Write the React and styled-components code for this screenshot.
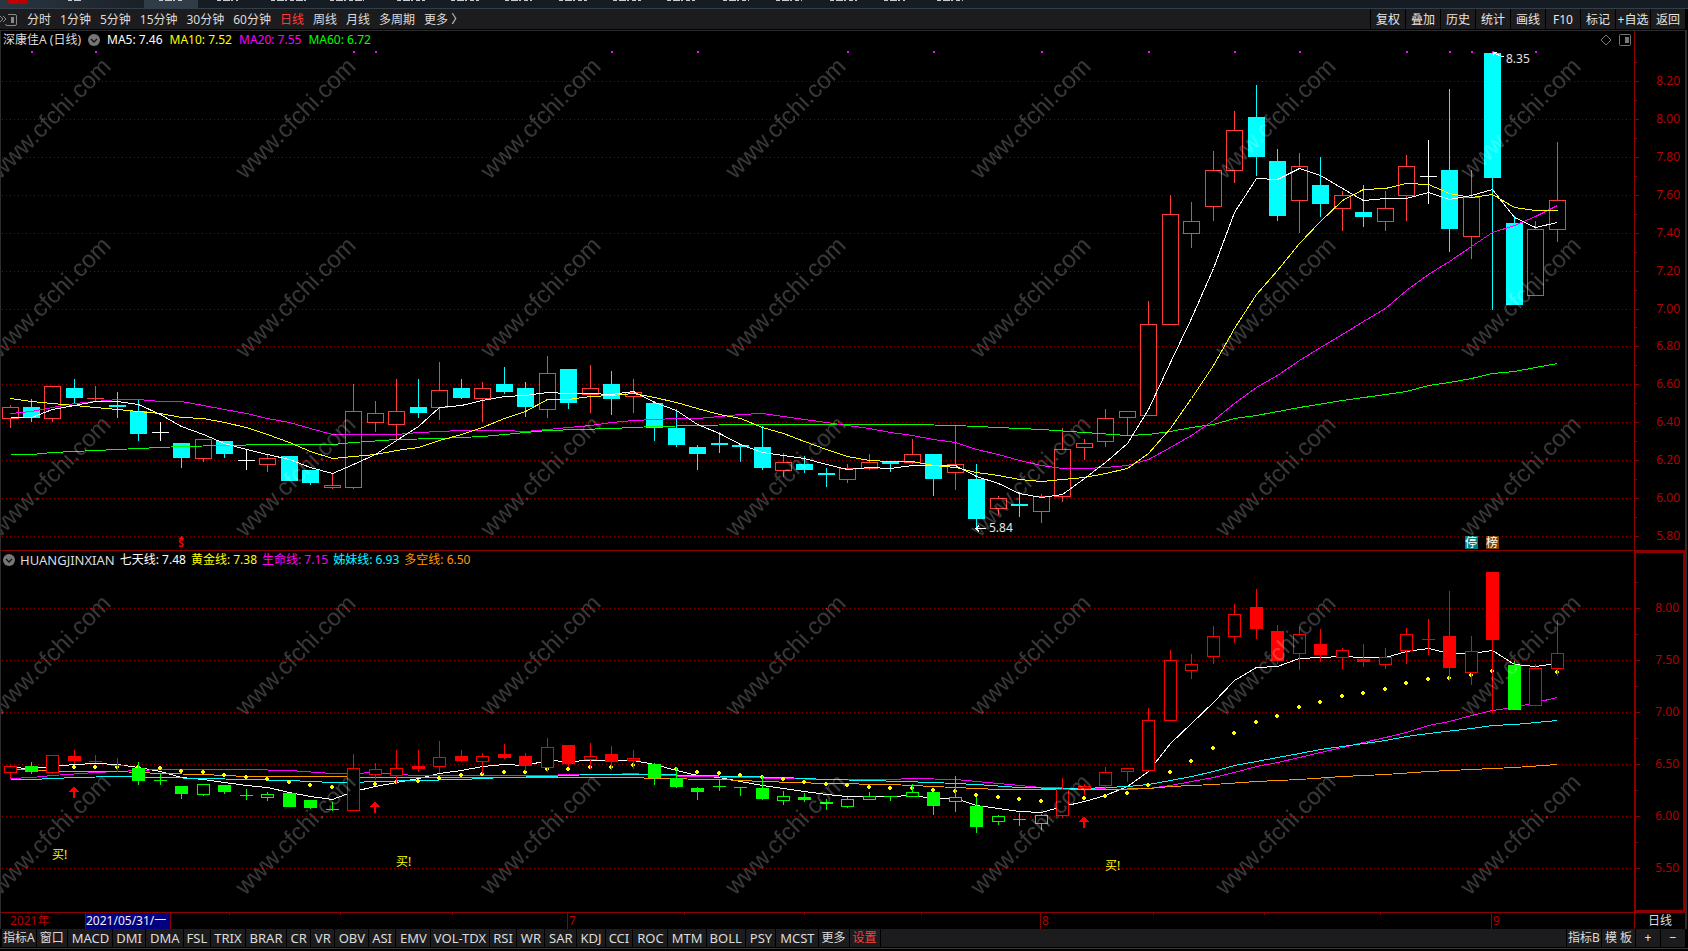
import React, { useLayoutEffect, useRef, useState } from "react"
import styled, { createGlobalStyle } from "styled-components"

const GlobalStyle = createGlobalStyle`
  * {
    box-sizing: border-box;
  }

  body {
    margin: 0;
    background: #000;
    color: #dcdcdc;
    font: 12px/16px "Noto Sans", "Noto Sans CJK SC", sans-serif;
  }

  button {
    margin: 0;
    border: 0;
    font: inherit;
    white-space: nowrap;
    cursor: pointer;
  }

  svg {
    display: block;
  }

  svg text {
    font-size: 12px;
  }
`

const WHITE = "#ffffff"
const YELLOW = "#ffff00"
const MAGENTA = "#ff00ff"
const CYAN = "#00ffff"
const LIME = "#00ff00"
const ORANGE = "#ff9900"
const RED = "#ff0000"
const UP = "#ff3c3c"
const FRAME = "#8c0000"
const LABEL = "#b40000"

const periods = [
  "分时",
  "1分钟",
  "5分钟",
  "15分钟",
  "30分钟",
  "60分钟",
  "日线",
  "周线",
  "月线",
  "多周期",
  "更多 〉",
]

const tools = [
  "复权",
  "叠加",
  "历史",
  "统计",
  "画线",
  "F10",
  "标记",
  "+自选",
  "返回",
]

const indicators = [
  "MACD",
  "DMI",
  "DMA",
  "FSL",
  "TRIX",
  "BRAR",
  "CR",
  "VR",
  "OBV",
  "ASI",
  "EMV",
  "VOL-TDX",
  "RSI",
  "WR",
  "SAR",
  "KDJ",
  "CCI",
  "ROC",
  "MTM",
  "BOLL",
  "PSY",
  "MCST",
]

// open, close, high, low
const days = [
  [6.42, 6.48, 6.49, 6.37],
  [6.48, 6.42, 6.52, 6.4],
  [6.42, 6.59, 6.59, 6.4],
  [6.58, 6.53, 6.63, 6.5],
  [6.52, 6.53, 6.59, 6.51],
  [6.49, 6.48, 6.56, 6.42],
  [6.46, 6.34, 6.52, 6.3],
  [6.35, 6.35, 6.4, 6.3],
  [6.29, 6.21, 6.29, 6.16],
  [6.21, 6.31, 6.31, 6.19],
  [6.3, 6.23, 6.3, 6.21],
  [6.2, 6.2, 6.26, 6.15],
  [6.18, 6.21, 6.23, 6.14],
  [6.22, 6.09, 6.22, 6.09],
  [6.15, 6.08, 6.15, 6.07],
  [6.06, 6.07, 6.13, 6.05],
  [6.06, 6.46, 6.6, 6.05],
  [6.4, 6.45, 6.51, 6.35],
  [6.39, 6.46, 6.63, 6.31],
  [6.48, 6.45, 6.63, 6.42],
  [6.48, 6.57, 6.72, 6.41],
  [6.58, 6.53, 6.63, 6.52],
  [6.53, 6.58, 6.61, 6.4],
  [6.6, 6.56, 6.69, 6.55],
  [6.58, 6.48, 6.61, 6.43],
  [6.47, 6.66, 6.75, 6.42],
  [6.68, 6.5, 6.68, 6.47],
  [6.55, 6.58, 6.7, 6.45],
  [6.6, 6.52, 6.67, 6.44],
  [6.54, 6.56, 6.63, 6.45],
  [6.5, 6.37, 6.51, 6.3],
  [6.37, 6.28, 6.47, 6.27],
  [6.27, 6.23, 6.28, 6.15],
  [6.29, 6.28, 6.35, 6.24],
  [6.28, 6.27, 6.28, 6.19],
  [6.27, 6.16, 6.38, 6.15],
  [6.15, 6.19, 6.24, 6.11],
  [6.18, 6.15, 6.22, 6.13],
  [6.13, 6.12, 6.16, 6.06],
  [6.1, 6.16, 6.18, 6.08],
  [6.16, 6.19, 6.23, 6.15],
  [6.19, 6.18, 6.19, 6.14],
  [6.19, 6.23, 6.31, 6.18],
  [6.23, 6.1, 6.23, 6.01],
  [6.14, 6.18, 6.38, 6.04],
  [6.1, 5.89, 6.18, 5.84],
  [5.95, 6.0, 6.01, 5.91],
  [5.97, 5.96, 6.03, 5.9],
  [5.93, 6.01, 6.02, 5.87],
  [6.01, 6.26, 6.37, 5.98],
  [6.27, 6.29, 6.31, 6.2],
  [6.3, 6.42, 6.47, 6.27],
  [6.43, 6.46, 6.46, 6.33],
  [6.44, 6.92, 7.04, 6.44],
  [6.92, 7.5, 7.6, 6.92],
  [7.4, 7.46, 7.56, 7.32],
  [7.54, 7.73, 7.83, 7.46],
  [7.73, 7.94, 8.04, 7.66],
  [8.01, 7.8, 8.18, 7.7],
  [7.78, 7.49, 7.84, 7.46],
  [7.57, 7.75, 7.82, 7.4],
  [7.65, 7.55, 7.8, 7.48],
  [7.53, 7.6, 7.62, 7.41],
  [7.51, 7.48, 7.65, 7.43],
  [7.46, 7.53, 7.62, 7.41],
  [7.6, 7.75, 7.81, 7.46],
  [7.7, 7.7, 7.89, 7.55],
  [7.73, 7.42, 8.16, 7.3],
  [7.38, 7.59, 7.73, 7.26],
  [8.35, 7.69, 8.35, 6.99],
  [7.45, 7.02, 7.49, 7.02],
  [7.07, 7.42, 7.46, 7.07],
  [7.42, 7.57, 7.88, 7.35],
]

const closes = days.map(day => day[1])

// the first values need closes from before the visible range
const average = (n, head) =>
  closes.map((_, i) =>
    i < head.length
      ? [i, head[i]]
      : [i, closes.slice(i - n + 1, i + 1).reduce((a, b) => a + b, 0) / n]
  )

const ma5 = average(5, [6.43, 6.43, 6.47, 6.49])
const ma10 = average(10, [
  6.53, 6.51, 6.5, 6.49, 6.48, 6.47, 6.46, 6.45, 6.43,
])
const ma20 = average(20, [
  6.45, 6.46, 6.48, 6.5, 6.51, 6.52, 6.52, 6.51, 6.51, 6.49, 6.47, 6.45, 6.42,
  6.4, 6.37, 6.34, 6.34, 6.34, 6.34,
])
const ma60 = [
  [0, 6.23], [1, 6.234], [2, 6.244], [4, 6.255], [6, 6.266], [8, 6.273],
  [10, 6.281], [12, 6.287], [15, 6.287], [16, 6.296], [18, 6.31],
  [20, 6.318], [22, 6.33], [25, 6.358], [28, 6.37], [30, 6.382],
  [34, 6.392], [42, 6.392], [44, 6.385], [46, 6.376], [48, 6.362],
  [50, 6.347], [52, 6.335], [53, 6.34], [54, 6.356], [55, 6.374],
  [56, 6.393], [57, 6.42], [58, 6.44], [60, 6.479], [62, 6.515],
  [64, 6.548], [65, 6.567], [66, 6.595], [67, 6.611], [68, 6.632],
  [69, 6.658], [70, 6.669], [71, 6.69], [72, 6.711],
]

const weekLine = [
  6.47, 6.458, 6.48, 6.5, 6.51, 6.5, 6.468, 6.436, 6.375, 6.356, 6.327, 6.301,
  6.276, 6.234, 6.192, 6.163, 6.24, 6.285, 6.324, 6.362, 6.413, 6.442, 6.48,
  6.5, 6.49, 6.535, 6.526, 6.538, 6.538, 6.538, 6.503, 6.446, 6.397, 6.372,
  6.337, 6.298, 6.269, 6.24, 6.215, 6.192, 6.192, 6.195, 6.202, 6.176, 6.17,
  6.106, 6.077, 6.051, 6.038, 6.1, 6.147, 6.205, 6.288, 6.43, 6.7, 6.894,
  7.093, 7.308, 7.43, 7.442, 7.519, 7.529, 7.538, 7.529, 7.529, 7.587, 7.615,
  7.571, 7.567, 7.596, 7.458, 7.442, 7.468,
].map((price, i) => [i, price])
const lifeLine = [
  [0, 6.362], [1, 6.372], [2, 6.391], [4, 6.423], [6, 6.442], [7, 6.449],
  [11, 6.449], [13, 6.442], [15, 6.413], [16, 6.413], [17, 6.423],
  [18, 6.404], [19, 6.394], [25, 6.394], [26, 6.404], [28, 6.404],
  [29, 6.413], [30, 6.397], [32, 6.381], [34, 6.375], [38, 6.356],
  [41, 6.356], [42, 6.362], [44, 6.356], [46, 6.317], [48, 6.276],
  [50, 6.266], [52, 6.262], [53, 6.272], [54, 6.298], [55, 6.34],
  [56, 6.378], [57, 6.423], [58, 6.478], [59, 6.516], [60, 6.571],
  [61, 6.619], [62, 6.663], [63, 6.708], [64, 6.756], [65, 6.811],
  [66, 6.872], [67, 6.917], [68, 6.968], [69, 7.016], [70, 7.045],
  [71, 7.093], [72, 7.144],
]
const sisterLine = [
  [0, 6.356], [1, 6.356], [3, 6.372], [5, 6.381], [7, 6.375], [9, 6.362],
  [11, 6.356], [13, 6.346], [15, 6.327], [16, 6.327], [17, 6.337],
  [19, 6.346], [21, 6.356], [23, 6.375], [25, 6.385], [27, 6.404],
  [30, 6.404], [32, 6.394], [34, 6.385], [36, 6.372], [38, 6.356],
  [40, 6.346], [43, 6.33], [45, 6.308], [47, 6.279], [49, 6.266],
  [50, 6.266], [52, 6.285], [53, 6.304], [54, 6.346], [55, 6.385],
  [56, 6.433], [57, 6.49], [58, 6.532], [59, 6.571], [60, 6.609],
  [61, 6.644], [62, 6.673], [64, 6.731], [65, 6.772], [66, 6.801],
  [68, 6.846], [69, 6.875], [70, 6.885], [72, 6.923],
]
const trendLine = [
  [0, 6.452], [3, 6.436], [5, 6.43], [7, 6.413], [9, 6.404], [11, 6.388],
  [13, 6.381], [15, 6.381], [17, 6.375], [29, 6.375], [30, 6.362],
  [33, 6.356], [35, 6.34], [38, 6.317], [41, 6.308], [43, 6.288],
  [46, 6.26], [51, 6.26], [53, 6.272], [54, 6.288], [56, 6.308],
  [58, 6.34], [60, 6.356], [62, 6.385], [64, 6.404], [66, 6.433],
  [68, 6.452], [70, 6.471], [72, 6.5],
]
const goldDots = [
  6.46, 6.46, 6.47, 6.474, 6.474, 6.474, 6.474, 6.458, 6.43, 6.42, 6.397,
  6.378, 6.359, 6.33, 6.3, 6.282, 6.29, 6.311, 6.33, 6.34, 6.369, 6.391,
  6.407, 6.426, 6.426, 6.455, 6.455, 6.474, 6.474, 6.487, 6.47, 6.455, 6.426,
  6.417, 6.397, 6.378, 6.356, 6.33, 6.311, 6.301, 6.282, 6.272, 6.272, 6.253,
  6.244, 6.205, 6.186, 6.167, 6.147, 6.16, 6.176, 6.195, 6.224, 6.301, 6.426,
  6.532, 6.657, 6.801, 6.907, 6.965, 7.051, 7.099, 7.157, 7.186, 7.224, 7.282,
  7.321, 7.33, 7.359, 7.397, 7.36, 7.34, 7.388,
]

const infoDots = [1, 4, 16, 17, 28, 32, 39, 43, 48, 53, 57, 60, 65, 67, 68, 69, 71]
const buyArrows = [[3, 6.29], [17, 6.144], [50, 6]]
const buyTexts = [[2, 5.59], [18, 5.52], [51, 5.48]]
const months = [["7", 26], ["8", 48], ["9", 69]]

const isWeak = i => i === 1 || (i > 5 && i < 16) || (i > 29 && i < 49) || i === 70

const mainColor = ([open, close]) => {
  if (open === close) return WHITE
  return close > open ? UP : CYAN
}
const subColor = i => (isWeak(i) ? LIME : RED)

const xOf = (i, width) => Math.floor(9 + (i * (width - 86)) / 72)

const useSize = () => {
  const ref = useRef(null)
  const [size, setSize] = useState({ width: 0, height: 0 })

  useLayoutEffect(() => {
    const measure = () => {
      const { width, height } = ref.current.getBoundingClientRect()
      setSize({ width: Math.round(width), height: Math.round(height) })
    }
    measure()
    const observer = new ResizeObserver(measure)
    observer.observe(ref.current)
    return () => observer.disconnect()
  }, [])

  return [ref, size]
}

const Candle = ({ day, x, y, half, color }) => {
  const [open, close, high, low] = day
  const top = Math.round(y(Math.max(open, close)))
  const bottom = Math.round(y(Math.min(open, close)))
  const highY = Math.round(y(high))
  const lowY = Math.round(y(low))
  const hollow = close > open && bottom - top > 1
  return (
    <g fill={color}>
      <rect x={x} y={highY} width="1" height={Math.max(lowY - highY, 1)} />
      {hollow ? (
        <rect
          x={x - half + 0.5}
          y={top + 0.5}
          width={half * 2}
          height={bottom - top}
          fill="#000"
          stroke={color}
        />
      ) : (
        <rect
          x={x - half}
          y={top}
          width={half * 2 + 1}
          height={Math.max(bottom - top, 1)}
        />
      )}
    </g>
  )
}

const Line = ({ points, width, y, color }) => (
  <polyline
    points={points
      .map(([i, price]) => `${xOf(i, width) + 0.5},${Math.round(y(price)) + 0.5}`)
      .join(" ")}
    fill="none"
    stroke={color}
  />
)

const Grid = ({ prices, width, y }) =>
  prices.map(price => (
    <line
      key={price}
      x1="1"
      x2={width}
      y1={Math.round(y(price)) + 0.5}
      y2={Math.round(y(price)) + 0.5}
      stroke={FRAME}
      strokeDasharray="1 3"
    />
  ))

const PriceAxis = ({ prices, y, step, boxed }) => {
  // legend height, less the frame of the box
  const shift = boxed ? 16 : 18
  return (
    <Axis $boxed={boxed}>
      <svg width="100%" height="100%">
        {prices.map(price => {
          const py = Math.round(y(price)) + shift
          const minor = Math.round(y(price + step / 2)) + shift
          return (
            <g key={price}>
              <rect x="0" y={py} width="4" height="1" fill={FRAME} />
              <rect x="0" y={minor} width="2" height="1" fill={FRAME} />
              <text x={boxed ? 43 : 45} y={py + 4} textAnchor="end" fill={LABEL}>
                {price.toFixed(2)}
              </text>
            </g>
          )
        })}
      </svg>
    </Axis>
  )
}

const mainPrices = Array.from({ length: 13 }, (_, i) => 8.2 - i * 0.2)
const subPrices = [8, 7.5, 7, 6.5, 6, 5.5]

const MainPanel = () => {
  const [ref, { width, height }] = useSize()
  const y = price => 32 + ((8.2 - price) * (height - 46)) / 2.4
  const highX = xOf(69, width)
  const lowX = xOf(45, width)
  const lowY = Math.round(y(5.84))

  return (
    <Panel $grow={519}>
      <Plot>
        <Legend>
          <span>深康佳A (日线)</span>
          <Chevron />
          <Value $color={WHITE}>MA5: 7.46</Value>
          <Value $color={YELLOW}>MA10: 7.52</Value>
          <Value $color={MAGENTA}>MA20: 7.55</Value>
          <Value $color={LIME}>MA60: 6.72</Value>
          <Corner aria-label="布局">
            <svg width="31" height="12" fill="none" stroke="#777">
              <path d="M6 1 L11 6 L6 11 L1 6 Z" />
              <rect x="19.5" y="0.5" width="11" height="11" rx="1" />
              <rect x="25" y="3" width="4" height="6" fill="#777" stroke="none" />
            </svg>
          </Corner>
        </Legend>
        <Canvas ref={ref}>
          <svg width={width} height={height} shapeRendering="crispEdges">
            <Grid prices={mainPrices} width={width} y={y} />
            {days.map((day, i) => (
              <Candle
                key={i}
                day={day}
                x={xOf(i, width)}
                y={y}
                half={8}
                color={mainColor(day)}
              />
            ))}
            <Line points={ma60} width={width} y={y} color={LIME} />
            <Line points={ma20} width={width} y={y} color={MAGENTA} />
            <Line points={ma10} width={width} y={y} color={YELLOW} />
            <Line points={ma5} width={width} y={y} color={WHITE} />
            {infoDots.map(i => (
              <rect
                key={i}
                x={xOf(i, width)}
                y="2"
                width="2"
                height="2"
                fill={MAGENTA}
              />
            ))}
            <g stroke={WHITE} fill="none">
              <path d={`M${highX + 12} 8 L${highX + 1} 4 m4 -1 h-4 v4`} />
              <path
                d={`M${lowX + 10} ${lowY + 0.5} h-10 m3 -3 l-3 3 l3 3`}
              />
            </g>
            <g fill="#e6e6e6">
              <text x={highX + 14} y="14">8.35</text>
              <text x={lowX + 13} y={lowY + 4}>5.84</text>
            </g>
            <path
              d={`M${xOf(8, width)} ${height - 14} l3 3 h-6 z`}
              fill={RED}
            />
            <Signal x={xOf(8, width)} y={height - 3}>S</Signal>
            <rect x={xOf(68, width) - 6} y={height - 14} width="13" height="13" fill="#008080" />
            <rect x={xOf(69, width) - 6} y={height - 14} width="13" height="13" fill="#804000" />
            <g fill={WHITE} textAnchor="middle">
              <text x={xOf(68, width)} y={height - 3}>停</text>
              <text x={xOf(69, width)} y={height - 3}>榜</text>
            </g>
          </svg>
        </Canvas>
      </Plot>
      <PriceAxis prices={mainPrices} y={y} step={0.2} />
    </Panel>
  )
}

const SubPanel = () => {
  const [ref, { width, height }] = useSize()
  const y = price => 39 + ((8 - price) * (height - 83)) / 2.5

  return (
    <Panel $grow={361} $ruled>
      <Plot>
        <Legend $tight>
          <Chevron />
          <Name>HUANGJINXIAN</Name>
          <Value $color={WHITE}>七天线: 7.48</Value>
          <Value $color={YELLOW}>黄金线: 7.38</Value>
          <Value $color={MAGENTA}>生命线: 7.15</Value>
          <Value $color={CYAN}>姊妹线: 6.93</Value>
          <Value $color={ORANGE}>多空线: 6.50</Value>
        </Legend>
        <Canvas ref={ref}>
          <svg width={width} height={height} shapeRendering="crispEdges">
            <Grid prices={subPrices} width={width} y={y} />
            <Line points={weekLine} width={width} y={y} color={WHITE} />
            <Line points={lifeLine} width={width} y={y} color={MAGENTA} />
            <Line points={sisterLine} width={width} y={y} color={CYAN} />
            <Line points={trendLine} width={width} y={y} color={ORANGE} />
            {goldDots.map((price, i) => (
              <path
                key={i}
                d={`M${xOf(i, width) - 2} ${Math.round(y(price)) - 1} h1 v-1 h2 v1 h1 v2 h-1 v1 h-2 v-1 h-1 z`}
                fill={YELLOW}
              />
            ))}
            {days.map((day, i) => (
              <Candle
                key={i}
                day={day}
                x={xOf(i, width)}
                y={y}
                half={6}
                color={subColor(i)}
              />
            ))}
            {buyArrows.map(([i, price]) => (
              <path
                key={i}
                d={`M${xOf(i, width)} ${Math.round(y(price))} l5 6 h-4 v6 h-2 v-6 h-4 z`}
                fill={RED}
              />
            ))}
            {buyTexts.map(([i, price]) => (
              <text key={i} x={xOf(i, width)} y={Math.round(y(price))} fill={YELLOW}>
                买!
              </text>
            ))}
          </svg>
        </Canvas>
      </Plot>
      <PriceAxis prices={subPrices} y={y} step={0.5} boxed />
    </Panel>
  )
}

const Timeline = () => {
  const [ref, { width }] = useSize()
  const ticks = [10.2, 15.4, 20.6, 31.4, 37, 42.4, 53.2, 58.4, 63.8]

  return (
    <TimeRow>
      <TimeScale ref={ref}>
        <svg width={width} height="16" fill={LABEL}>
          <text x="9" y="12">2021年</text>
          <rect x="84" y="0" width="86" height="16" fill={FRAME} />
          <rect x="85" y="0" width="84" height="16" fill="#000080" />
          <text x="85" y="12" fill="#f0f0f0">2021/05/31/一</text>
          {ticks.map(i => (
            <rect key={i} x={xOf(i, width)} y="0" width="1" height="2" fill={FRAME} />
          ))}
          {months.map(([month, i]) => (
            <g key={month}>
              <rect x={xOf(i, width) - 1} y="0" width="1" height="16" fill={FRAME} />
              <text x={xOf(i, width) + 1} y="12">{month}</text>
            </g>
          ))}
        </svg>
      </TimeScale>
      <TimeUnit>日线</TimeUnit>
    </TimeRow>
  )
}

const Chevron = () => (
  <RoundButton aria-label="展开">
    <svg width="12" height="12" fill="none">
      <circle cx="6" cy="6" r="6" fill="#777" />
      <path d="M3 5 L6 8 L9 5" stroke="#111" strokeWidth="1.4" />
    </svg>
  </RoundButton>
)

// lower edges of the captions that stay above the window top
const captions = [
  [68, 14], [159, 25], [217, 21], [271, 35], [330, 34], [397, 28], [451, 28],
  [505, 27], [559, 28], [613, 28], [667, 28], [723, 26], [776, 26], [830, 27],
  [884, 21], [937, 26],
]

const App = () => (
  <Window>
    <GlobalStyle />
    <TitleStrip>
      <svg width="100%" height="8" aria-hidden="true">
        <rect x="144" y="0" width="54" height="8" fill="#303c48" />
        <path d="M8 0 h20 v1 q0 3 -3 3 h-14 q-3 0 -3 -3 z" fill="#c00000" />
        {captions.map(([x, width]) => (
          <line
            key={x}
            x1={x}
            x2={x + width}
            y1="0.5"
            y2="0.5"
            stroke="#c8ccd0"
            strokeDasharray="4 2 7 1 2 3"
          />
        ))}
      </svg>
    </TitleStrip>
    <Toolbar>
      <Fold aria-label="侧栏">
        <svg width="18" height="12" fill="none" stroke="#888">
          <path d="M0 2 L3 5 L0 8 M3 2 L6 5 L3 8" />
          <path d="M8 0.5 h7 q1.5 0 1.5 1.5 v8 q0 1.5 -1.5 1.5 h-8 q-1.5 0 -1.5 -1.5" />
          <rect x="11" y="3" width="3" height="6" fill="#888" stroke="none" />
        </svg>
      </Fold>
      <Periods>
        {periods.map(period => (
          <Period key={period} $active={period === "日线"}>
            {period}
          </Period>
        ))}
      </Periods>
      <Tools>
        {tools.map(tool => (
          <Tool key={tool}>{tool}</Tool>
        ))}
      </Tools>
    </Toolbar>
    <Desk>
      <MainPanel />
      <SubPanel />
      <Timeline />
      <Watermark aria-hidden="true">
        <defs>
          <pattern
            id="mark"
            x="-10"
            y="0"
            width="245"
            height="179"
            patternUnits="userSpaceOnUse"
          >
            <text transform="translate(9 149) rotate(-45)">www.cfchi.com</text>
          </pattern>
        </defs>
        <rect width="100%" height="895" fill="url(#mark)" />
      </Watermark>
    </Desk>
    <Footer>
      <Tab $pad={1}>指标A</Tab>
      <Tab $pad={3}>窗口</Tab>
      {indicators.map(name => (
        <Tab key={name} $pad={3} $latin $wide={!/[IL]/.test(name)}>
          {name}
        </Tab>
      ))}
      <Tab $pad={3}>更多</Tab>
      <Tab $pad={3} $active>
        设置
      </Tab>
      <Filler />
      <Tab $pad={1}>指标B</Tab>
      <Tab $pad={3}>模 板</Tab>
      <Zoom aria-label="放大">+</Zoom>
      <Zoom aria-label="缩小">−</Zoom>
    </Footer>
    <Base />
  </Window>
)

const Window = styled.div`
  display: flex;
  flex-direction: column;
  height: 100vh;
  min-height: 560px;
  min-width: 1240px;
  overflow: hidden;
`

const TitleStrip = styled.div`
  flex: none;
  height: 9px;
  border-bottom: 1px solid #323e4a;
  background: linear-gradient(90deg, #2c3742 0, #161c23 170px, #161c23 100%);
`

const Toolbar = styled.div`
  flex: none;
  display: flex;
  height: 20px;
  background: #1c1c1e;
`

const Fold = styled.button`
  padding: 1px 0 0;
  background: none;
`

const Periods = styled.div`
  display: flex;
  gap: 9px;
  padding-left: 9px;
`

const Period = styled.button`
  padding: 2px 0 0;
  background: none;
  color: ${props => (props.$active ? UP : "#dcdcdc")};
`

const Tools = styled.div`
  display: flex;
  gap: 1px;
  margin-left: auto;
  padding: 0 3px 0 1px;
  background: #000;
`

const Tool = styled.button`
  width: 34px;
  padding: 2px 0 0;
  background: #1c1c1e;
  color: #e6e6e6;
`

const Desk = styled.main`
  position: relative;
  flex: 1;
  display: flex;
  flex-direction: column;
  min-height: 0;
  margin-top: 1px;
  border: 1px solid #2c2c2e;
  border-width: 1px 2px 0 1px;
  margin-right: 1px;
`

const Panel = styled.section`
  flex: ${props => props.$grow} 1 0;
  display: flex;
  min-height: 0;
  border-top: ${props => (props.$ruled ? `1px solid ${FRAME}` : 0)};
`

const Plot = styled.div`
  flex: 1;
  display: flex;
  flex-direction: column;
  min-width: 0;
`

const Legend = styled.div`
  display: flex;
  align-items: center;
  gap: ${props => (props.$tight ? 5 : 7)}px;
  height: 18px;
  padding: 0 3px 0 2px;
`

const Name = styled.span`
  font-size: 13px;
`

const Value = styled.span`
  color: ${props => props.$color};
`

const Corner = styled.button`
  margin-left: auto;
  padding: 0;
  background: none;
`

const RoundButton = styled.button`
  padding: 0;
  background: none;
`

const Canvas = styled.div`
  flex: 1;
  min-height: 0;
  overflow: hidden;
`

const Axis = styled.div`
  flex: none;
  width: 51px;
  border: ${props => (props.$boxed ? 2 : 0)}px solid ${FRAME};
  border-left: ${props => (props.$boxed ? 2 : 1)}px solid ${FRAME};
`

const Signal = styled.text`
  && {
    fill: ${RED};
    font-size: 10px;
    font-weight: bold;
    text-anchor: middle;
  }
`

const TimeRow = styled.div`
  flex: none;
  display: flex;
  height: 17px;
  border-top: 1px solid ${FRAME};
`

const TimeScale = styled.div`
  flex: 1;
  min-width: 0;
`

const TimeUnit = styled.div`
  width: 51px;
  border-left: 1px solid ${FRAME};
  text-align: center;
`

const Watermark = styled.svg`
  position: absolute;
  inset: 0;
  width: 100%;
  height: 100%;
  pointer-events: none;

  text {
    fill: rgba(255, 255, 255, 0.22);
    font-family: "Liberation Sans", Arial, sans-serif;
    font-size: 24px;
  }
`

const Footer = styled.footer`
  flex: none;
  display: flex;
  gap: 1px;
  height: 18px;
  padding: 0 3px 0 2px;
`

const Tab = styled.button`
  padding: 0 ${props => props.$pad}px;
  padding-left: ${props => props.$pad + (props.$wide ? 1 : 0)}px;
  background: #1c1c1e;
  color: ${props => (props.$active ? UP : "#dcdcdc")};
  font-size: ${props => (props.$latin ? 13 : 12)}px;
`

const Filler = styled.div`
  flex: 1;
  background: #1c1c1e;
`

const Zoom = styled.button`
  width: 24px;
  padding: 0;
  background: #1c1c1e;
  color: #e6e6e6;
`

const Base = styled.div`
  flex: none;
  height: 3px;
  margin-top: 1px;
  border-top: 1px solid #38383a;
`

export default App
